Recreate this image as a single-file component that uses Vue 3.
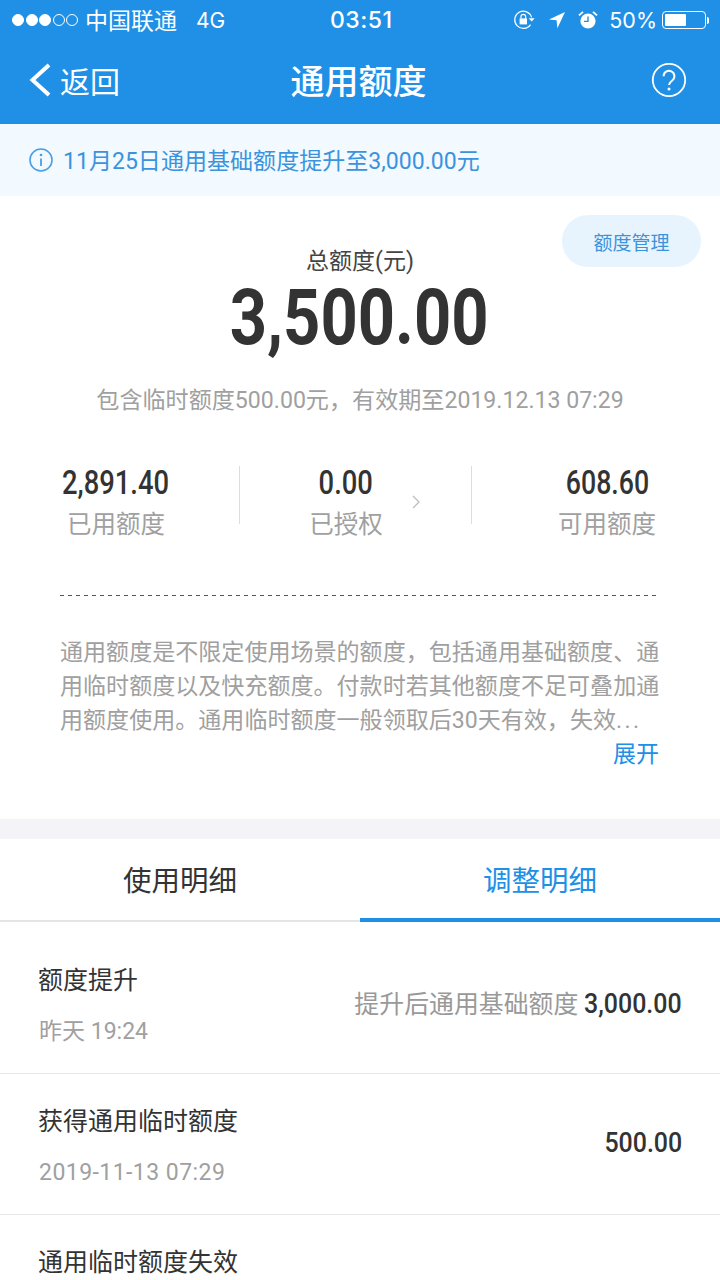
<template>
  <div class="page">
    <header class="top">
      <div class="status">
        <div class="signal">
          <i v-for="n in 5" :key="n" :class="['dot', { on: n <= 3 }]"></i>
        </div>
        <span class="carrier">中国联通</span>
        <span class="net">4G</span>
        <span class="time">03:51</span>
        <div class="statusRight">
          <svg class="lock" width="24" height="22" viewBox="0 0 24 22">
            <path d="M17.5 15.6A8.6 8.6 0 1 1 18.6 8.4" fill="none" stroke="#fff" stroke-width="1.2" />
            <path d="M15.7 9.2h6l-3 3.2z" fill="#fff" />
            <path d="M6.6 9.4h7.4v6H6.6z" fill="#fff" />
            <path d="M8 9.4V7.6a2.3 2.3 0 0 1 4.6 0v1.8" fill="none" stroke="#fff" stroke-width="1.2" />
          </svg>
          <svg class="arrow" width="18" height="18" viewBox="0 0 18 18">
            <path d="M17 1 1 8.6l7.6.6.8 8z" fill="#fff" />
          </svg>
          <svg class="alarm" width="20" height="20" viewBox="0 0 20 20">
            <circle cx="10" cy="11" r="7.6" fill="#fff" />
            <path d="M10 6.4V11.4H6" fill="none" stroke="#2090e6" stroke-width="1.4" />
            <path d="M1 5.4 5 1.8M19 5.4 15 1.8" stroke="#fff" stroke-width="1.8" />
          </svg>
          <span class="percent">50%</span>
          <div class="battery"><div class="level"></div></div>
          <div class="batteryCap"></div>
        </div>
      </div>
      <nav class="nav">
        <div class="back">
          <svg width="24" height="34" viewBox="0 0 24 34">
            <path d="M21 2 4.5 17 21 32" fill="none" stroke="#fff" stroke-width="4" />
          </svg>
          <span>返回</span>
        </div>
        <h1 class="title">通用额度</h1>
        <svg class="help" width="36" height="36" viewBox="0 0 36 36">
          <circle cx="18" cy="18" r="16.2" fill="none" stroke="#fff" stroke-width="1.8" />
          <path d="M12.6 14.2a5.4 5.4 0 1 1 8.6 4.3c-2 1.5-3.2 2.4-3.2 4.6" fill="none" stroke="#fff" stroke-width="2" />
          <circle cx="18" cy="27" r="1.5" fill="#fff" />
        </svg>
      </nav>
    </header>

    <div class="notice">
      <svg width="24" height="24" viewBox="0 0 24 24">
        <circle cx="12" cy="12" r="11" fill="none" stroke="#4a9fe4" stroke-width="1.6" />
        <path d="M12 10.5V18" stroke="#4a9fe4" stroke-width="1.8" />
        <circle cx="12" cy="7" r="1.3" fill="#4a9fe4" />
      </svg>
      <span class="noticeText">11月25日通用基础额度提升至3,000.00元</span>
    </div>

    <section class="summary">
      <button class="manage">额度管理</button>
      <div class="totalLabel">总额度(元)</div>
      <div class="total">3,500.00</div>
      <div class="validity">包含临时额度500.00元，有效期至2019.12.13 07:29</div>

      <div class="stats">
        <div class="stat">
          <div class="statValue">2,891.40</div>
          <div class="statLabel">已用额度</div>
        </div>
        <div class="stat middle">
          <div class="statValue">0.00</div>
          <div class="statLabel">已授权</div>
          <svg class="chevron" width="8" height="14" viewBox="0 0 8 14">
            <path d="M1 1l6 6-6 6" fill="none" stroke="#bbb" stroke-width="1.2" />
          </svg>
        </div>
        <div class="stat last">
          <div class="statValue">608.60</div>
          <div class="statLabel">可用额度</div>
        </div>
      </div>

      <div class="dashed"></div>

      <div class="desc">
        <div>通用额度是不限定使用场景的额度，包括通用基础额度、通</div>
        <div>用临时额度以及快充额度。付款时若其他额度不足可叠加通</div>
        <div>用额度使用。通用临时额度一般领取后30天有效，失效<span class="dots">...</span></div>
      </div>
      <div class="expand">展开</div>
    </section>

    <div class="gap"></div>

    <div class="tabs">
      <div v-for="tab in tabs" :key="tab" :class="['tab', { active: tab === activeTab }]" @click="activeTab = tab">{{ tab }}</div>
    </div>

    <div class="list">
      <div v-for="row in rows" :key="row.name" class="row">
        <div class="rowLeft">
          <div class="rowName">{{ row.name }}</div>
          <div v-if="row.date" :class="['rowDate', { spaced: row.date.includes('-') }]">{{ row.date }}</div>
        </div>
        <div v-if="row.amount" class="rowRight">
          <span v-if="row.note" class="rowNote">{{ row.note }}</span>
          <span class="rowAmount">{{ row.amount }}</span>
        </div>
      </div>
    </div>
  </div>
</template>

<script setup>
import { ref } from 'vue'

const tabs = ['使用明细', '调整明细']
const activeTab = ref('调整明细')

const rows = [
  { name: '额度提升', date: '昨天 19:24', note: '提升后通用基础额度', amount: '3,000.00' },
  { name: '获得通用临时额度', date: '2019-11-13 07:29', amount: '500.00' },
  { name: '通用临时额度失效' }
]
</script>

<style>
html, body {
  margin: 0;
  background: #fff;
  overflow: hidden;
}
</style>

<style scoped>
.page {
  width: 720px;
  height: 1280px;
  overflow: hidden;
  background: #fff;
  font-family: Roboto, "Noto Sans CJK SC", sans-serif;
  color: #333;
}

.top {
  background: #2090e6;
  color: #fff;
  height: 124px;
}

.status {
  height: 40px;
  display: flex;
  align-items: center;
  position: relative;
  font-size: 23px;
  padding-left: 12px;
  font-family: Inter, "Noto Sans CJK SC", sans-serif;
}

.signal {
  display: flex;
  gap: 1.5px;
  width: 66px;
}

.dot {
  width: 12px;
  height: 12px;
  border-radius: 50%;
  border: 1px solid #fff;
  box-sizing: border-box;
}

.dot.on {
  background: #fff;
}

.carrier {
  margin-left: 7px;
  margin-bottom: 3px;
}

.net {
  margin-left: 19px;
  font-size: 21px;
}

.time {
  position: absolute;
  left: 330px;
  font-size: 23px;
  font-weight: 500;
  letter-spacing: 0.5px;
}

.statusRight {
  position: absolute;
  right: 11px;
  top: 0;
  height: 40px;
  display: flex;
  align-items: center;
}

.lock { margin-right: 11px; }
.arrow { margin-right: 12px; }
.alarm { margin-right: 11px; }

.percent {
  font-size: 21.5px;
  margin-right: 5px;
}

.battery {
  width: 44px;
  height: 18px;
  border: 1px solid #fff;
  border-radius: 4px;
  padding: 2px;
  box-sizing: border-box;
}

.level {
  width: 21px;
  height: 12px;
  background: #fff;
  border-radius: 1px;
}

.batteryCap {
  width: 2px;
  height: 7px;
  background: #fff;
  margin-left: 1px;
  border-radius: 0 2px 2px 0;
}

.nav {
  height: 84px;
  box-sizing: border-box;
  display: flex;
  align-items: center;
  justify-content: space-between;
  padding: 0 33px 5px 28px;
}

.back {
  display: flex;
  align-items: center;
  gap: 8px;
  font-size: 30px;
  width: 120px;
}

.title {
  margin: 0 0 0 1px;
  font-size: 34px;
  font-weight: 500;
}

.help {
  margin-left: 83px;
}

.notice {
  height: 72px;
  background: #f2f9ff;
  display: flex;
  align-items: center;
  gap: 10px;
  padding-left: 29px;
  font-size: 23.05px;
  color: #3b93dc;
}

.noticeText {
  margin-bottom: 2px;
}

.summary {
  height: 623px;
  position: relative;
  box-sizing: border-box;
  padding-top: 48px;
}

.manage {
  position: absolute;
  top: 19px;
  right: 19px;
  width: 139px;
  height: 52px;
  border: 0;
  border-radius: 26px;
  background: #e8f4fd;
  color: #3b93dc;
  font-family: inherit;
  font-size: 19px;
}

.totalLabel {
  text-align: center;
  font-size: 23px;
  line-height: 36px;
  color: #444;
}

.total {
  width: fit-content;
  margin: 0 auto;
  font-size: 77px;
  font-weight: 700;
  line-height: 76px;
  color: #333;
  transform: translateX(-1px) scaleX(0.845);
}

.validity {
  text-align: center;
  font-size: 23.1px;
  line-height: 34px;
  margin-top: 28px;
  color: #a0a0a0;
}

.stats {
  display: grid;
  grid-template-columns: 239px 233px 1fr;
  margin-top: 48px;
  height: 74px;
}

.stat {
  display: flex;
  flex-direction: column;
  align-items: center;
  width: 108px;
  margin-left: 62px;
}

.stat.middle {
  width: auto;
  margin-left: 0;
  padding-right: 19px;
  position: relative;
  border-left: 1px solid #ddd;
  border-right: 1px solid #ddd;
  height: 58px;
}

.stat.last {
  margin-left: 81px;
}

.stat.last .statValue {
  transform: scaleX(0.81);
}

.statValue {
  font-size: 33px;
  font-weight: 500;
  line-height: 34px;
  white-space: nowrap;
  color: #333;
  transform: scaleX(0.83);
}

.statLabel {
  font-size: 24.5px;
  line-height: 34px;
  margin-top: 8px;
  color: #a0a0a0;
  white-space: nowrap;
}

.chevron {
  position: absolute;
  right: 51px;
  top: 29px;
}

.dashed {
  width: 596px;
  height: 1px;
  margin: 55px 60px 0;
  background: repeating-linear-gradient(90deg, #555 0 4px, transparent 4px 8px);
}

.desc {
  margin: 40px 60px 0;
  font-size: 23.05px;
  line-height: 34px;
  color: #a0a0a0;
  white-space: nowrap;
}

.dots {
  letter-spacing: 2.4px;
}

.expand {
  text-align: right;
  padding-right: 61px;
  font-size: 23px;
  line-height: 34px;
  color: #2090e6;
}

.gap {
  height: 20px;
  background: #f4f4f8;
}

.tabs {
  display: flex;
  height: 83px;
  box-sizing: border-box;
  border-bottom: 2px solid #e4e4e4;
}

.tab {
  flex: 1;
  text-align: center;
  line-height: 85px;
  font-size: 28.5px;
  color: #333;
}

.tab.active {
  color: #2090e6;
  height: 83px;
  box-sizing: border-box;
  border-bottom: 4px solid #2090e6;
}

.list {
  padding-top: 11px;
}

.row {
  height: 141px;
  box-sizing: border-box;
  border-bottom: 1px solid #e8e8e8;
  padding: 30px 39px 0;
  display: flex;
  align-items: flex-start;
  justify-content: space-between;
}

.rowName {
  font-size: 25px;
  line-height: 36px;
  margin-left: -1px;
  color: #333;
}

.rowDate {
  font-size: 23px;
  line-height: 32px;
  margin-top: 17px;
  color: #a0a0a0;
}

.rowDate.spaced {
  letter-spacing: 0.45px;
}

.rowRight {
  align-self: center;
  margin-top: -32px;
  margin-right: -1px;
}

.rowNote {
  font-size: 24.9px;
  color: #999;
  margin-right: -2px;
}

.rowAmount {
  display: inline-block;
  font-size: 27px;
  font-weight: 500;
  color: #333;
  transform: scaleX(0.924);
  transform-origin: right center;
}
</style>
